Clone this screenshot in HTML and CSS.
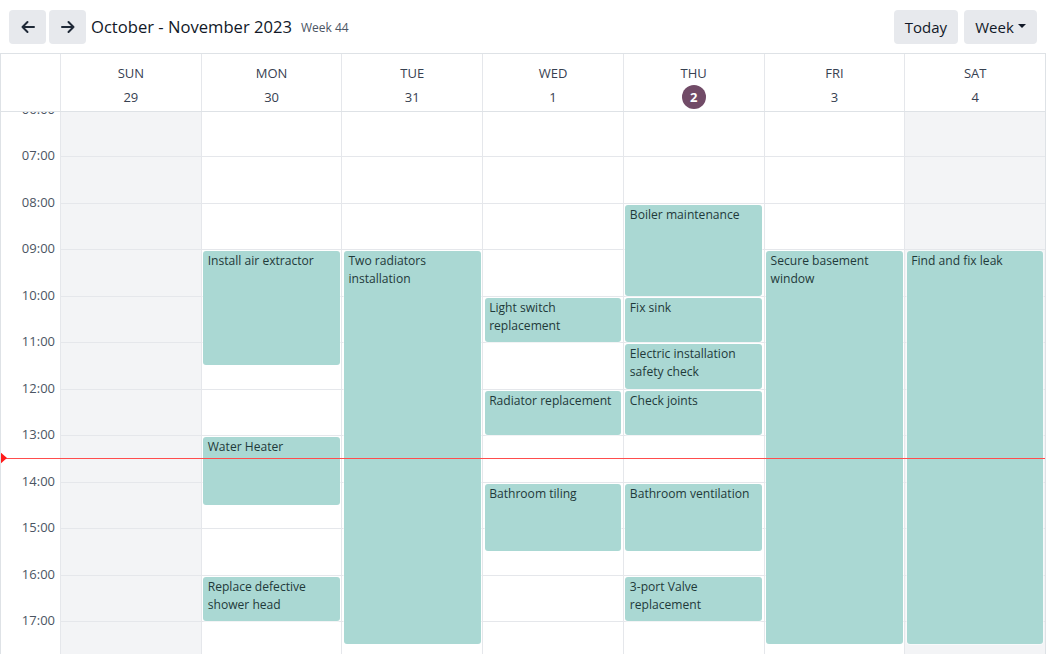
FILE: index.html
```html
<!DOCTYPE html>
<html lang="en">
<head>
<meta charset="utf-8">
<title>Calendar</title>
<link rel="stylesheet" href="styles.css">
</head>
<body>
<div class="topbar">
  <div class="nav">
    <button class="btn icon" aria-label="Previous">
      <svg width="16" height="16" viewBox="0 0 16 16"><path d="M14 8H2.5M7.5 3 2.5 8l5 5" fill="none" stroke="currentColor" stroke-width="2" stroke-linecap="round" stroke-linejoin="round"/></svg>
    </button>
    <button class="btn icon" aria-label="Next">
      <svg width="16" height="16" viewBox="0 0 16 16"><path d="M2 8h11.5M8.5 3l5 5-5 5" fill="none" stroke="currentColor" stroke-width="2" stroke-linecap="round" stroke-linejoin="round"/></svg>
    </button>
  </div>
  <h1 class="title">October - November 2023</h1>
  <span class="weeknum">Week 44</span>
  <div class="spacer"></div>
  <button class="btn text">Today</button>
  <button class="btn text dropdown">Week<span class="caret"></span></button>
</div>

<div class="cal">
  <div class="head">
    <div class="gutter"></div>
    <div class="day"><div class="dname">SUN</div><div class="dnum">29</div></div>
    <div class="day"><div class="dname">MON</div><div class="dnum">30</div></div>
    <div class="day"><div class="dname">TUE</div><div class="dnum">31</div></div>
    <div class="day"><div class="dname">WED</div><div class="dnum">1</div></div>
    <div class="day"><div class="dname">THU</div><div class="dnum today">2</div></div>
    <div class="day"><div class="dname">FRI</div><div class="dnum">3</div></div>
    <div class="day"><div class="dname">SAT</div><div class="dnum">4</div></div>
  </div>

  <div class="body">
    <div class="track">
      <div class="times">
        <div class="t"><span>06:00</span></div>
        <div class="t"><span>07:00</span></div>
        <div class="t"><span>08:00</span></div>
        <div class="t"><span>09:00</span></div>
        <div class="t"><span>10:00</span></div>
        <div class="t"><span>11:00</span></div>
        <div class="t"><span>12:00</span></div>
        <div class="t"><span>13:00</span></div>
        <div class="t"><span>14:00</span></div>
        <div class="t"><span>15:00</span></div>
        <div class="t"><span>16:00</span></div>
        <div class="t"><span>17:00</span></div>
      </div>

      <div class="col weekend">
        <div class="slot"></div><div class="slot"></div><div class="slot"></div><div class="slot"></div><div class="slot"></div><div class="slot"></div><div class="slot"></div><div class="slot"></div><div class="slot"></div><div class="slot"></div><div class="slot"></div><div class="slot"></div>
      </div>

      <div class="col">
        <div class="slot"></div><div class="slot"></div><div class="slot"></div><div class="slot"></div><div class="slot"></div><div class="slot"></div><div class="slot"></div><div class="slot"></div><div class="slot"></div><div class="slot"></div><div class="slot"></div><div class="slot"></div>
        <div class="event" style="top:141.5px;height:114.25px">Install air extractor</div>
        <div class="event" style="top:327.5px;height:67.75px">Water Heater</div>
        <div class="event" style="top:467px;height:44.5px">Replace defective shower head</div>
      </div>

      <div class="col">
        <div class="slot"></div><div class="slot"></div><div class="slot"></div><div class="slot"></div><div class="slot"></div><div class="slot"></div><div class="slot"></div><div class="slot"></div><div class="slot"></div><div class="slot"></div><div class="slot"></div><div class="slot"></div>
        <div class="event" style="top:141.5px;height:393.25px">Two radiators installation</div>
      </div>

      <div class="col">
        <div class="slot"></div><div class="slot"></div><div class="slot"></div><div class="slot"></div><div class="slot"></div><div class="slot"></div><div class="slot"></div><div class="slot"></div><div class="slot"></div><div class="slot"></div><div class="slot"></div><div class="slot"></div>
        <div class="event" style="top:188px;height:44.5px">Light switch replacement</div>
        <div class="event" style="top:281px;height:44.5px">Radiator replacement</div>
        <div class="event" style="top:374px;height:67.75px">Bathroom tiling</div>
      </div>

      <div class="col">
        <div class="slot"></div><div class="slot"></div><div class="slot"></div><div class="slot"></div><div class="slot"></div><div class="slot"></div><div class="slot"></div><div class="slot"></div><div class="slot"></div><div class="slot"></div><div class="slot"></div><div class="slot"></div>
        <div class="event" style="top:95px;height:91px">Boiler maintenance</div>
        <div class="event" style="top:188px;height:44.5px">Fix sink</div>
        <div class="event" style="top:234.5px;height:44.5px">Electric installation safety check</div>
        <div class="event" style="top:281px;height:44.5px">Check joints</div>
        <div class="event" style="top:374px;height:67.75px">Bathroom ventilation</div>
        <div class="event" style="top:467px;height:44.5px">3-port Valve replacement</div>
      </div>

      <div class="col">
        <div class="slot"></div><div class="slot"></div><div class="slot"></div><div class="slot"></div><div class="slot"></div><div class="slot"></div><div class="slot"></div><div class="slot"></div><div class="slot"></div><div class="slot"></div><div class="slot"></div><div class="slot"></div>
        <div class="event" style="top:141.5px;height:393.25px">Secure basement window</div>
      </div>

      <div class="col weekend">
        <div class="slot"></div><div class="slot"></div><div class="slot"></div><div class="slot"></div><div class="slot"></div><div class="slot"></div><div class="slot"></div><div class="slot"></div><div class="slot"></div><div class="slot"></div><div class="slot"></div><div class="slot"></div>
        <div class="event" style="top:141.5px;height:393.25px">Find and fix leak</div>
      </div>

      <div class="now" style="top:348px"></div>
    </div>
  </div>
</div>
</body>
</html>
```

FILE: styles.css
```css
* { box-sizing: border-box; }

html, body {
  margin: 0;
  height: 100%;
  background: #fff;
}

body {
  font-family: "Open Sans", "Noto Sans", sans-serif;
  color: #1f2937;
  display: flex;
  flex-direction: column;
  overflow: hidden;
}

/* ---------- top bar ---------- */
.topbar {
  height: 53px;
  flex: none;
  display: flex;
  align-items: center;
  padding: 0 9px;
}

.nav {
  display: flex;
  gap: 3px;
}

.btn {
  border: none;
  background: #e7e9ed;
  border-radius: 4px;
  height: 34px;
  color: #111827;
  font-family: inherit;
  cursor: pointer;
  display: flex;
  align-items: center;
  justify-content: center;
}

.btn.icon {
  width: 37px;
  padding: 0;
  color: #1f2937;
}

.btn.text {
  font-size: 15px;
  padding: 0 11px;
}

.btn.text + .btn.text {
  margin-left: 6px;
}

.dropdown {
  width: 73px;
  gap: 4px;
}

.caret {
  width: 0;
  height: 0;
  border-left: 4px solid transparent;
  border-right: 4px solid transparent;
  border-top: 4px solid currentColor;
  margin-top: -1px;
}

.title {
  margin: 0 0 0 5px;
  font-size: 16.6px;
  font-weight: 400;
  color: #111827;
}

.weeknum {
  margin-left: 9px;
  margin-top: 2px;
  font-size: 12px;
  color: #4b5563;
}

.spacer { flex: 1; }

/* ---------- calendar ---------- */
.cal {
  flex: 1;
  min-height: 0;
  display: flex;
  flex-direction: column;
  border-top: 1px solid #dee2e6;
  border-left: 1px solid #dee2e6;
  border-right: 1px solid #dee2e6;
}

.head {
  flex: none;
  display: grid;
  grid-template-columns: 59px repeat(7, 1fr);
  height: 58px;
  border-bottom: 1px solid #dee2e6;
}

.day {
  border-left: 1px solid #e5e7eb;
  display: flex;
  flex-direction: column;
  align-items: center;
  padding-top: 10px;
  font-size: 13px;
  color: #374151;
}

.dname {
  line-height: 18px;
}

.dnum {
  margin-top: 3px;
  height: 24px;
  min-width: 24px;
  line-height: 24px;
  text-align: center;
}

.dnum.today {
  background: #714b67;
  color: #fff;
  border-radius: 50%;
  font-weight: 700;
}

.body {
  flex: 1;
  min-height: 0;
  overflow: hidden;
}

.track {
  position: relative;
  margin-top: -2.5px;
  display: grid;
  grid-template-columns: 59px repeat(7, 1fr);
}

.times {
  display: flex;
  flex-direction: column;
}

.t {
  height: 46.5px;
  text-align: right;
  padding-right: 5px;
  font-size: 13px;
  color: #4b5563;
}

.t span {
  display: block;
  line-height: 16px;
  transform: translateY(-9px);
}

.col {
  position: relative;
  border-left: 1px solid #e5e7eb;
}

.col.weekend {
  background: #f3f4f6;
}

.slot {
  height: 46.5px;
  border-top: 1px solid #e5e7eb;
}

.event {
  position: absolute;
  left: 1.5px;
  right: 1.5px;
  background: #aad8d3;
  border-radius: 3px;
  padding: 1px 4.5px 0;
  font-size: 12.1px;
  line-height: 18px;
  color: #1f3a3a;
  overflow: hidden;
  box-shadow: 0 0 0 1px rgba(255, 255, 255, 0.5);
}

.now {
  position: absolute;
  z-index: 2;
  left: -1px;
  right: 0;
  height: 1px;
  background: #ff4d4d;
}

.now::before {
  content: "";
  position: absolute;
  left: 0;
  top: -6px;
  border-top: 6px solid transparent;
  border-bottom: 6px solid transparent;
  border-left: 7px solid #ff1a1a;
}
```
